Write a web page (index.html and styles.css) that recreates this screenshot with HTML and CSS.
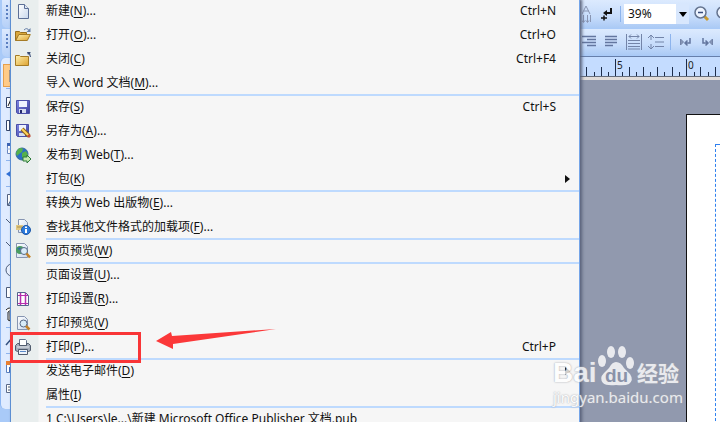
FILE: index.html
```html
<!DOCTYPE html>
<html lang="zh-CN">
<head>
    <meta charset="utf-8">
    <meta name="viewport" content="width=device-width, initial-scale=1">
    <title>Microsoft Office Publisher</title>
    <link rel="stylesheet" href="styles.css">
</head>
<body>
<svg class="defs" width="0" height="0">
    <defs>
        <linearGradient id="folder" x1="0" y1="0" x2="1" y2="1"><stop offset="0" stop-color="#fff2b0"/><stop offset="1" stop-color="#dda22f"/></linearGradient>
        <linearGradient id="paper" x1="0" y1="0" x2="1" y2="1"><stop offset="0" stop-color="#fff"/><stop offset="1" stop-color="#c9d8ed"/></linearGradient>
        <linearGradient id="disk" x1="0" y1="0" x2="1" y2="1"><stop offset="0" stop-color="#8189e4"/><stop offset="1" stop-color="#393d9c"/></linearGradient>
    </defs>
</svg>
<div class="app">
    <!--左侧工具箱-->
    <div class="toolbox">
        <div class="grip"></div>
        <div class="grip"></div>
        <div class="tools">
            <button class="on" aria-label="选择"><svg width="16" height="16"><path d="M6 2v12l3-3h4z" fill="#fff" stroke="#4a618f"/></svg></button>
            <hr>
            <button aria-label="文本框"><svg width="16" height="16"><path d="M3.500 3.500h12v10h-12z" fill="#fff" stroke="#34466c"/><path d="M5 12l3-7 3 7M6 9h4" fill="none" stroke="#222"/></svg></button>
            <button aria-label="表格"><svg width="16" height="16"><path d="M3.500 3.500h12v10h-12zM6.500 3v11" fill="#fff" stroke="#34466c"/></svg></button>
            <button aria-label="日历"><svg width="16" height="16"><path d="M4.500 3.500h12v10h-12z" fill="#fff" stroke="#6c88c0"/><path d="M4 3h12v3h-12z" fill="#3c63b4"/><path d="M4 9h12" stroke="#9ab5e4"/></svg></button>
            <hr>
            <button aria-label="艺术字"><svg width="16" height="16"><path d="M3 8l6-4v8z" fill="#2f6fd6"/></svg></button>
            <hr>
            <button aria-label="图片"><svg width="16" height="16"><path d="M4.500 2.500h12v11h-12z" fill="#fff" stroke="#52617f"/><path d="M5 13l5-8 4 8" fill="#9cb5d8" stroke="#445d83"/></svg></button>
            <button aria-label="直线"><svg width="16" height="16"><path d="M3 4l9 9" stroke="#4c5c7a"/></svg></button>
            <button aria-label="箭头"><svg width="16" height="16"><path d="M3 4l9 9" stroke="#4c5c7a"/></svg></button>
            <button aria-label="椭圆"><svg width="16" height="16"><circle cx="9" cy="9" r="6" fill="#e8f0ff" stroke="#4c5c7a"/></svg></button>
            <button aria-label="矩形"><svg width="16" height="16"><path d="M3.500 3.500h12v10h-12z" fill="#fff" stroke="#4c5c7a"/></svg></button>
            <button aria-label="自选图形"><svg width="16" height="18"><path d="M3 4q4-4 5 0l-3 2v8l5 2M7 6v8h6" fill="#fff" stroke="#222"/></svg></button>
            <hr>
            <button aria-label="书签"><svg width="16" height="16"><path d="M3 12l7-8" stroke="#33507f" stroke-width="1.500"/></svg></button>
            <hr>
            <button aria-label="设计库"><svg width="16" height="16"><path d="M3.500 2.500h10v11h-10z" fill="#fff" stroke="#5a7fbf"/><path d="M3 2h11v4h-11z" fill="#e98032"/><path d="M6 8h5v5h-5z" fill="#3b67b8"/></svg></button>
            <button aria-label="内容库"><svg width="16" height="16"><path d="M3.500 2.500h10v8h-10z" fill="#fff" stroke="#5a6a8a"/><path d="M5 5h6M5 8h6M8 11l4 4" stroke="#44546f"/></svg></button>
        </div>
    </div>

    <!--文件菜单-->
    <ul class="menu">
        <li><button><span class="icon"><svg width="16" height="16"><path d="M3.500 1.500h6l4 4v10h-10z" fill="url(#paper)" stroke="#5c6f96"/><path d="M9.500 1.500v4h4" fill="#dfe8f5" stroke="#5c6f96"/></svg></span><span>新建(<u>N</u>)...</span><kbd>Ctrl+N</kbd></button></li>
        <li><button><span class="icon"><svg width="16" height="16"><path d="M.5 13.500v-9h4l1 1h6v3h-8z" fill="#d9a73c" stroke="#99701d"/><path d="M.8 13.500l3-6h11.500l-3 6z" fill="url(#folder)" stroke="#a57b25"/><path d="M9 3q3-3 5 .5" fill="none" stroke="#667fa8"/><path d="M15.500 1v4h-4z" fill="#667fa8"/></svg></span><span>打开(<u>O</u>)...</span><kbd>Ctrl+O</kbd></button></li>
        <li><button><span class="icon"><svg width="16" height="16"><path d="M.5 14.500v-10h4l1 1h8v9z" fill="url(#folder)" stroke="#a57b25"/><path d="M12 1h4l-1 1 1 4h-1l-1-3-1 1z" fill="#3b4e78"/></svg></span><span>关闭(<u>C</u>)</span><kbd>Ctrl+F4</kbd></button></li>
        <li><button><span class="icon"></span><span>导入 Word 文档(<u>M</u>)...</span></button></li>
        <li class="line" role="separator"></li>
        <li><button><span class="icon"><svg width="16" height="16"><path d="M1.500 1.500h13v13h-12l-1-1z" fill="url(#disk)" stroke="#4a4fa8"/><path d="M4 2h8v6H4z" fill="#eef3ff"/><path d="M4 10h7v4H4z" fill="#d5dcf0"/><path d="M5 11h2v3H5z" fill="#252a6c"/></svg></span><span>保存(<u>S</u>)</span><kbd>Ctrl+S</kbd></button></li>
        <li><button><span class="icon"><svg width="16" height="16"><path d="M1.500 1.500h12v12h-11l-1-1z" fill="url(#disk)" stroke="#4a4fa8"/><path d="M4 2h7v6H4z" fill="#eef3ff"/><path d="M4 10h6v3H4z" fill="#d5dcf0"/><path d="M7 6l7 7" stroke="#8b641f" stroke-width="4"/><path d="M7 6l7 7" stroke="#ffd45c" stroke-width="2"/><path d="M13 12l2 2" stroke="#c14b38" stroke-width="3"/></svg></span><span>另存为(<u>A</u>)...</span></button></li>
        <li><button><span class="icon"><svg width="16" height="16"><circle cx="7" cy="7" r="6" fill="#2b6fc4" stroke="#376a9d"/><path d="M3 2q3-2 5 0l-1 3-3 2-2 2-1-3zM7 6l4-2 2 4-3 4-3-2z" fill="#55b14b"/><path d="M8 10h4V8l4 4-4 4v-2H8z" fill="#c0e7ad" stroke="#2d7b3b"/></svg></span><span>发布到 Web(<u>T</u>)...</span></button></li>
        <li><button><span class="icon"></span><span>打包(<u>K</u>)</span><i class="more"></i></button></li>
        <li class="line" role="separator"></li>
        <li><button><span class="icon"></span><span>转换为 Web 出版物(<u>E</u>)...</span></button></li>
        <li><button><span class="icon"><svg width="16" height="16"><path d="M3.500.5h6l3 3v10h-9z" fill="url(#paper)" stroke="#8695b1"/><path d="M1 6h7v5H1z" fill="#e2c983"/><path d="M2 8h5" stroke="#a98f51"/><circle cx="11" cy="11" r="4.500" fill="#2c7bdd" stroke="#1b56a8"/><path d="M11 10v4M11 7.500v1.500" stroke="#fff" stroke-width="2"/></svg></span><span>查找其他文件格式的加载项(<u>F</u>)...</span></button></li>
        <li class="line" role="separator"></li>
        <li><button><span class="icon"><svg width="16" height="16"><path d="M1.500.5h8l3 3v11h-11z" fill="url(#paper)" stroke="#8695b1"/><circle cx="5" cy="7" r="4" fill="#4a9d62"/><path d="M2 6l3-2 1 3z" fill="#2d69ad"/><circle cx="9" cy="8" r="3.500" fill="#d8ecf8" stroke="#566985"/><path d="M11.500 10.500l3.500 4" stroke="#c48228" stroke-width="2.500"/></svg></span><span>网页预览(<u>W</u>)</span></button></li>
        <li class="line" role="separator"></li>
        <li><button><span class="icon"></span><span>页面设置(<u>U</u>)...</span></button></li>
        <li><button><span class="icon"><svg width="16" height="16"><path d="M2.500 1.500h8l3 3v10h-11z" fill="#fff" stroke="#54658c"/><path d="M5.500 2v12M10.500 2v12" stroke="#b62fae" stroke-width="1.500"/><path d="M3 4.500h10M3 12.500h10" stroke="#b62fae"/></svg></span><span>打印设置(<u>R</u>)...</span></button></li>
        <li><button><span class="icon"><svg width="16" height="16"><path d="M2.500 1.500h7l3 3v10h-10z" fill="url(#paper)" stroke="#8695b1"/><circle cx="8.500" cy="8.500" r="3.500" fill="#d8ecf8" stroke="#566985"/><path d="M11 11l3.500 3.500" stroke="#c48228" stroke-width="2.500"/></svg></span><span>打印预览(<u>V</u>)</span></button></li>
        <li class="marked">
            <button><span class="icon"><svg width="16" height="16"><path d="M4.500.5h6l1 1v5h-7z" fill="#fff" stroke="#66738c"/><path d="M.5 6.500l2-2h2v2h7v-2h2l2 2v5l-2 1h-11l-2-1z" fill="#a5adba" stroke="#505b6d"/><path d="M2 8h12" stroke="#e4e8ee"/><path d="M3.500 10.500h9v5h-9z" fill="#eef2f8" stroke="#505b6d"/><path d="M5 12.500h6" stroke="#5b8ac9"/></svg></span><span>打印(<u>P</u>)...</span><kbd>Ctrl+P</kbd></button>
            <div class="box"></div>
            <svg class="arrow" width="120" height="20"><path d="M0 12L15 3 16 7 120 0 17 15V20z" fill="#fb3839"/></svg>
        </li>
        <li class="line" role="separator"></li>
        <li><button><span class="icon"></span><span>发送电子邮件(<u>D</u>)</span><i class="more"></i></button></li>
        <li><button><span class="icon"></span><span>属性(<u>I</u>)</span></button></li>
        <li class="line" role="separator"></li>
        <li><button><span class="icon"></span><span><u>1</u> C:\Users\le...\新建 Microsoft Office Publisher 文档.pub</span></button></li>
    </ul>

    <!--右侧编辑区-->
    <div class="work">
        <div class="bar">
            <button class="slim" aria-label="文字方向"><svg width="10" height="18"><path d="M0 9L4 1l4 8M2 6h5M1.500 10v7M5.500 10v7M8.500 10v7M0 15.500l1.500 2 1.500-2M4 15.500l1.500 2 1.500-2" fill="none" stroke="#8995b2"/></svg></button>
            <button class="mark" aria-label="特殊字符"><svg width="14" height="14"><path d="M11 1v5H5" fill="none" stroke="#111" stroke-width="2"/><path d="M3 6l4-3v6z" fill="#111"/><path d="M1 11h6M4 8.500v5" stroke="#111" stroke-width="1.500"/></svg></button>
            <span class="split"></span>
            <input type="text" value="39%" aria-label="显示比例">
            <button class="drop" aria-label="选择比例"><svg width="8" height="5"><path d="M0 0h8L4 5z" fill="#000"/></svg></button>
            <button class="lens" aria-label="缩小"><svg width="16" height="16"><path d="M10 10l4 4" stroke="#c99a2d" stroke-width="3"/><circle cx="6.500" cy="6.500" r="5.500" fill="#edf4ff" stroke="#65748f" stroke-width="1.500"/><path d="M4 6.500h5" stroke="#374b78" stroke-width="1.500"/></svg></button>
            <button class="lens" aria-label="放大"><svg width="16" height="16"><path d="M10 10l4 4" stroke="#c99a2d" stroke-width="3"/><circle cx="6.500" cy="6.500" r="5.500" fill="#edf4ff" stroke="#65748f" stroke-width="1.500"/><path d="M4 6.500h5M6.500 4v5" stroke="#374b78" stroke-width="1.500"/></svg></button>
        </div>
        <div class="bar para">
            <button aria-label="右对齐"><svg width="16" height="14"><path d="M0 1.500h14M5 4.500h9M0 7.500h14M5 10.500h9" stroke="#63769f" stroke-width="1.500"/></svg></button>
            <button aria-label="两端对齐"><svg width="16" height="14"><path d="M1 1.500h12M1 4.500h12M1 7.500h12M1 10.500h8" stroke="#63769f" stroke-width="1.500"/></svg></button>
            <button aria-label="分散对齐"><svg width="16" height="16"><path d="M.5 0v16M15.500 0v16M3 2.500h10M5 .5l-2 2 2 2M11 .5l2 2-2 2M2 6.500h12M2 9.500h12M2 12.500h12M2 15h12" fill="none" stroke="#7384a8"/></svg></button>
            <button aria-label="行距"><svg width="16" height="16"><path d="M3 1v5M3 10v5M0 4l3-3 3 3M0 12l3 3 3-3M7 3.500h9M7 8h9M7 12.500h9" fill="none" stroke="#7384a8"/></svg></button>
            <span class="split"></span>
            <button aria-label="从左向右"><svg width="13" height="12"><path d="M1.500 3v6l3-3z" fill="#8696b7" stroke="#7384a8"/><path d="M11 2v5H7M8.500 4.500L6 7l2.500 2.500" fill="none" stroke="#63769f" stroke-width="1.500"/></svg></button>
            <button aria-label="从右向左"><svg width="13" height="12"><path d="M11.500 3v6l-3-3z" fill="#8696b7" stroke="#7384a8"/><path d="M2 2v5h4M4.500 4.500L7 7 4.500 9.500" fill="none" stroke="#63769f" stroke-width="1.500"/></svg></button>
        </div>
        <div class="ruler">
            <svg width="100%" height="20"><path d="M6.500 10v10M14.500 15v5M21.500 10v10M28.500 15v5M35.500 2v18M42.500 15v5M49.500 10v10M56.500 15v5M63.500 10v10M70.500 15v5M77.500 10v10M84.500 15v5M92.500 10v10M99.500 15v5M106.500 2v18M114.500 15v5M120.500 10v10M128.500 15v5M135.500 10v10" stroke="#1c2c4a"/><text x="37" y="12">5</text><text x="108" y="12">0</text></svg>
        </div>
        <div class="desk">
            <div class="sheet"><div class="guide"></div></div>
        </div>
    </div>

    <!--水印-->
    <div class="watermark">
        <div class="brand">
            <b>Bai</b>
            <svg width="38" height="42"><g fill="#fff"><ellipse cx="5" cy="16" rx="4" ry="6"/><ellipse cx="14" cy="7" rx="4" ry="6"/><ellipse cx="25" cy="7" rx="4" ry="6"/><ellipse cx="33" cy="18" rx="4" ry="6"/><path d="M19 17q5 0 8 6l6 6q4 6-1 10-4 2-13 1-10 1-13-2-4-5 1-10l5-5q3-6 7-6z"/></g><text x="8" y="37">du</text></svg>
            <span>经验</span>
        </div>
        <div class="site">jingyan.baidu.com</div>
    </div>
</div>
</body>
</html>
```
FILE: styles.css
```css
*{
    box-sizing: border-box;
    margin: 0;
    padding: 0;
}
body{
    font: 12px/24px "Noto Sans", "Noto Sans CJK SC", sans-serif;
    color: #111;
}
button{
    border: 0;
    background: none;
    font: inherit;
    color: inherit;
}
.defs{
    position: absolute;
}
.app{
    position: relative;
    display: grid;
    grid-template-columns: 10px 1fr 140px;
    height: 100vh;
    overflow: hidden;
}

/* 工具箱 */
.toolbox{
    overflow: hidden;
    background: #a9caf8;
}
.grip{
    height: 28px;
    margin: 0 0 1px 2px;
    padding: 5px 0 0 4px;
    border-radius: 0 0 0 5px;
    background: linear-gradient(#dce9fe, #b5d0f8);
}
.grip:before{
    content: "";
    display: block;
    width: 2px;
    height: 15px;
    background: repeating-linear-gradient(#5b7fc0 0 2px, transparent 2px 4px);
}
.tools{
    width: 30px;
    padding: 6px 0 8px 2px;
    border-left: 1px solid #8db6f2;
    border-radius: 5px 0 0 5px;
    background: #dfebff;
}
.tools button{
    display: flex;
    align-items: center;
    width: 28px;
    height: 23px;
}
.tools .on{
    border: 1px solid #e7a04c;
    background: #ffcb88;
}
.tools hr{
    height: 1px;
    margin: 1px 0 1px 3px;
    border: 0;
    background: #8eb4ee;
}

/* 菜单 */
.menu{
    z-index: 1;
    margin-top: -1px;
    list-style: none;
    border-left: 1px solid #5c8ed2;
    border-right: 1px solid #75a5e8;
    background: linear-gradient(90deg, #e9eeee 27px, #f6f6f6 28px);
    box-shadow: 2px 0 3px #59627a;
}
.menu button{
    display: flex;
    align-items: center;
    width: 100%;
    height: 24px;
    padding: 0 23px 0 4px;
    text-align: left;
    white-space: nowrap;
}
.icon{
    display: flex;
    width: 31px;
}
.menu kbd{
    margin-left: auto;
    font: inherit;
}
.menu u{
    text-underline-offset: 2px;
}
.more{
    margin: 0 -14px 0 auto;
    border: 4px solid transparent;
    border-left: 5px solid #111;
    border-right: 0;
}
.line{
    height: 2px;
    margin: -1px 0 -1px 35px;
    background: #bedafe;
}
.marked{
    position: relative;
}
.box{
    position: absolute;
    top: -3px;
    left: -1px;
    width: 131px;
    height: 31px;
    border: 3px solid #f93537;
}
.arrow{
    position: absolute;
    top: -6px;
    left: 145px;
}

/* 编辑区 */
.work{
    display: flex;
    flex-direction: column;
    overflow: hidden;
    background: #a9caf8;
}
.bar{
    display: flex;
    flex: none;
    align-items: center;
    height: 28px;
    margin-bottom: 1px;
    background: linear-gradient(#dceafe, #c6dcfb 60%, #abcaf5);
}
.bar button{
    display: flex;
    flex: none;
    align-items: center;
}
.bar .slim{
    width: 20px;
    padding-left: 2px;
}
.mark{
    width: 20px;
}
.split{
    flex: none;
    width: 1px;
    height: 16px;
    margin-right: 3px;
    background: #8db4ed;
}
.bar input{
    width: 52px;
    height: 20px;
    padding-left: 4px;
    border: 0;
    background: #fff;
    font: inherit;
    color: #111;
}
.bar .drop{
    justify-content: center;
    width: 13px;
    height: 20px;
    margin-right: 5px;
    background: #d8e7fd;
}
.lens{
    width: 22px;
}
.para{
    height: 26px;
    padding-left: 2px;
}
.para button{
    width: 22px;
}
.para .split{
    margin-right: 8px;
}
.ruler{
    flex: none;
    height: 24px;
    border-top: 1px solid #667fab;
    border-bottom: 3px solid #e0dcda;
    background: #c4dcff;
}
.ruler svg{
    display: block;
    border-bottom: 1px solid #646c7b;
}
.ruler text{
    font: 10px "Noto Sans", sans-serif;
    fill: #222;
}
.desk{
    flex: 1;
    padding: 34px 0 0 106px;
    background: #9199ae;
}
.sheet{
    height: 100%;
    padding: 29px 0 0 28px;
    border-top: 1px solid #111;
    border-left: 1px solid #111;
    background: #fff;
}
.guide{
    height: 100%;
    border-top: 1px dashed #2f80ef;
    border-left: 1px dashed #2f80ef;
}

/* 水印 */
.watermark{
    position: absolute;
    z-index: 2;
    right: 36px;
    bottom: 15px;
    width: 131px;
    opacity: .8;
    color: #fff;
    text-shadow: 0 0 2px #a0a3aa, 0 0 1px #b4b6bc;
}
.brand{
    display: flex;
    align-items: flex-end;
    height: 42px;
}
.brand b{
    width: 44px;
    font: bold 28px/28px "Liberation Sans", sans-serif;
}
.brand text{
    font: bold 19px "Liberation Sans", sans-serif;
    fill: #8991a8;
    text-shadow: none;
}
.brand span{
    font: bold 21px/30px "Noto Sans CJK SC", sans-serif;
    margin-left: 2px;
}
.site{
    font: 15px/20px "Noto Sans", sans-serif;
}
```
